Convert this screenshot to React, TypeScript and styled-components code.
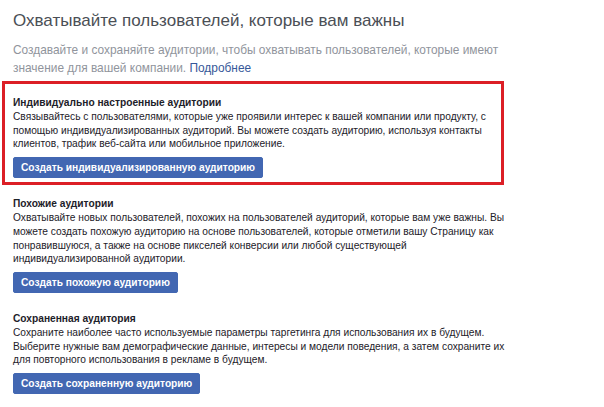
import styled, { createGlobalStyle } from "styled-components";

const GlobalStyle = createGlobalStyle`
  body {
    margin: 0;
    background: #ffffff;
    font-family: "Liberation Sans", Arial, sans-serif;
  }
`;

const Page = styled.div`
  width: 604px;
  padding: 9px 0 0 2px;
  box-sizing: border-box;
`;

const Intro = styled.div`
  padding-left: 11px;
`;

const Title = styled.h1`
  margin: 0;
  font-size: 17px;
  line-height: 24px;
  font-weight: normal;
  color: #4b4f56;
`;

const Lead = styled.p`
  margin: 8px 0 0;
  width: 490px;
  font-size: 11.9px;
  line-height: 18px;
  color: #90949c;
`;

const Link = styled.a`
  color: #365899;
  text-decoration: none;
`;

const Section = styled.section<{ $highlighted?: boolean }>`
  box-sizing: border-box;
  width: ${(p) => (p.$highlighted ? "502px" : "504px")};
  display: flex;
  flex-direction: column;
  align-items: flex-start;
  margin-top: ${(p) => (p.$highlighted ? "4px" : "12px")};
  padding: ${(p) => (p.$highlighted ? "12px 0 4px 8px" : "0 0 0 11px")};
  border: ${(p) => (p.$highlighted ? "3px solid #dc1f26" : "0")};
  & + & {
    margin-top: 12px;
  }
  & + & + & {
    margin-top: 19px;
  }
`;

const Heading = styled.h3`
  margin: 0;
  font-size: 10.2px;
  line-height: 14px;
  font-weight: bold;
  color: #1d2129;
`;

const Body = styled.p`
  margin: 0;
  font-size: 10.2px;
  line-height: 13.7px;
  color: #1d2129;
`;

const Button = styled.button`
  margin-top: 6px;
  height: 21px;
  padding: 0 7px;
  border: 1px solid #4267b2;
  border-radius: 2px;
  background: #4267b2;
  color: #ffffff;
  font-family: inherit;
  font-size: 10.2px;
  font-weight: bold;
  line-height: 19px;
  cursor: pointer;
`;

const sections = [
  {
    title: "Индивидуально настроенные аудитории",
    text: "Связывайтесь с пользователями, которые уже проявили интерес к вашей компании или продукту, с помощью индивидуализированных аудиторий. Вы можете создать аудиторию, используя контакты клиентов, трафик веб-сайта или мобильное приложение.",
    action: "Создать индивидуализированную аудиторию",
    highlighted: true,
  },
  {
    title: "Похожие аудитории",
    text: "Охватывайте новых пользователей, похожих на пользователей аудиторий, которые вам уже важны. Вы можете создать похожую аудиторию на основе пользователей, которые отметили вашу Страницу как понравившуюся, а также на основе пикселей конверсии или любой существующей индивидуализированной аудитории.",
    action: "Создать похожую аудиторию",
    highlighted: false,
  },
  {
    title: "Сохраненная аудитория",
    text: "Сохраните наиболее часто используемые параметры таргетинга для использования их в будущем. Выберите нужные вам демографические данные, интересы и модели поведения, а затем сохраните их для повторного использования в рекламе в будущем.",
    action: "Создать сохраненную аудиторию",
    highlighted: false,
  },
];

export default function App() {
  return (
    <>
      <GlobalStyle />
      <Page>
        <Intro>
          <Title>Охватывайте пользователей, которые вам важны</Title>
          <Lead>
            Создавайте и сохраняйте аудитории, чтобы охватывать пользователей, которые имеют значение для вашей компании.{" "}
            <Link href="#">Подробнее</Link>
          </Lead>
        </Intro>
        {sections.map((s) => (
          <Section key={s.title} $highlighted={s.highlighted}>
            <Heading>{s.title}</Heading>
            <Body>{s.text}</Body>
            <Button>{s.action}</Button>
          </Section>
        ))}
      </Page>
    </>
  );
}
